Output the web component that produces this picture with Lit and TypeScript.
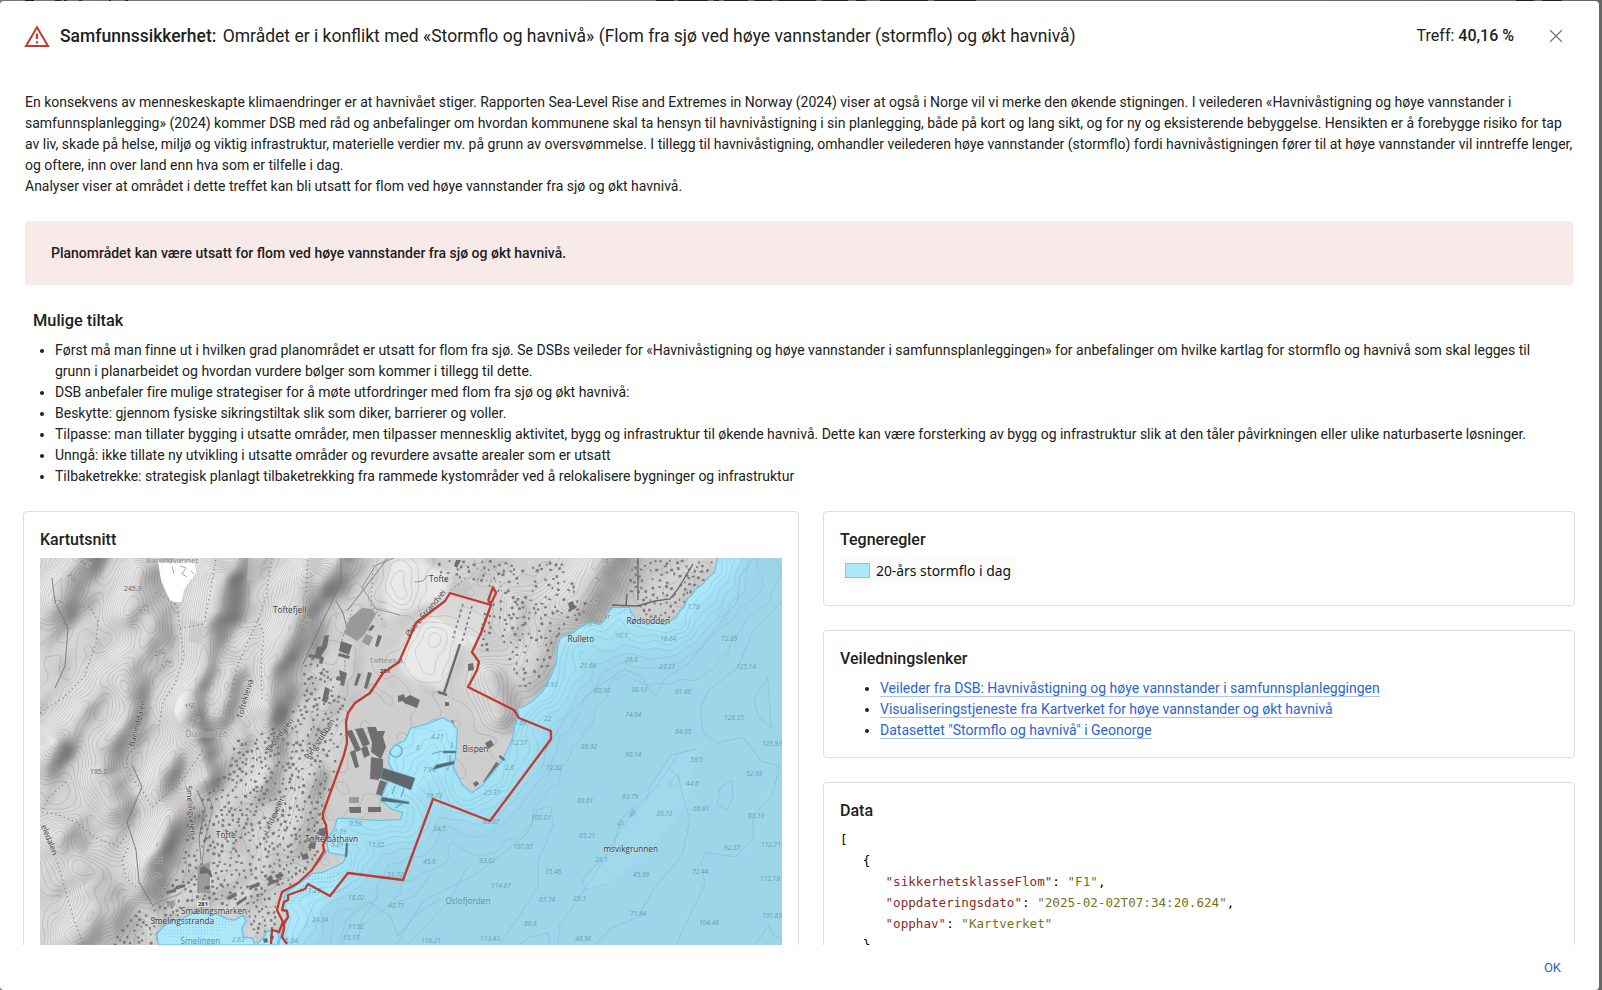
import { LitElement, html, css, svg } from "lit";
import { customElement } from "lit/decorators.js";

type Pt = [number, number];

/* ---------- geometry ---------- */
const X0 = 40, Y0 = 558, H = 387;

const seaEast: Pt[] = [[717,558],[714,572],[708,577],[703,583],[695,589],[692,594],[687,598],[684,606],[680,610],[676,617],[665,624],[655,622],[647,624],[636,619],[632,612],[630,607],[613,607],[608,612],[604,620],[600,624],[590,622],[578,628],[572,633],[560,637],[557,647],[556,663],[550,677],[543,690],[533,700],[524,706],[517,708],[518,716],[515,722],[512,738],[507,750],[500,763],[482,785],[472,792],[463,785],[454,767],[456,757],[457,745],[458,730],[452,722],[443,717],[428,723],[410,728],[405,740],[394,745],[389,752],[388,763],[392,770],[388,780],[380,800],[392,810],[402,813],[400,819],[380,820],[363,819],[348,818],[337,818],[333,830],[326,840],[328,853],[345,856],[343,862],[333,867],[322,872],[312,873],[297,884],[285,893],[282,907],[288,917],[282,930],[278,945]];
const seaPoly: Pt[] = [...seaEast, [278,960], [800,960], [800,540], [717,540]];
const bay: Pt[] = [[158,945],[157,934],[164,926],[173,921],[183,918],[193,913],[217,914],[227,919],[235,920],[243,915],[246,921],[242,928],[243,937],[252,938],[255,945]];
const bay2: Pt[] = [[256,945],[264,937],[267,931],[277,930],[279,938],[277,945]];

const redA: Pt[] = [[271,944],[272,930],[279,932],[283,922],[277,910],[279,902],[282,892],[298,883],[312,870],[324,851],[323,845],[327,836],[326,825],[323,818],[323,813],[344,755],[347,743],[346,722],[348,713],[355,703],[370,693],[383,673],[399,662],[416,623],[445,601],[450,593],[491,605],[481,633],[472,652],[479,662],[477,670],[468,687],[514,710],[519,718],[551,731],[551,739],[490,821],[433,799],[403,880],[348,873],[330,896],[308,884],[305,889],[288,895],[288,900],[284,902],[282,910],[287,911],[288,917],[284,923],[284,929],[282,937],[287,944]];
const redB: Pt[] = [[488,601],[493,587],[496,593],[491,603],[488,601]];

/* ridge: points, crest height, half width */
const ridges: [Pt[], number, number][] = [
  [[[84,540],[66,575],[52,600]], 55, 20],
  [[[140,572],[135,590],[124,614]], 48, 17],
  [[[150,610],[155,634],[140,655],[104,682],[85,708],[60,738]], 42, 20],
  [[[213,575],[207,600],[206,644],[197,675],[180,708]], 60, 20],
  [[[238,548],[228,575],[222,610]], 32, 14],
  [[[305,575],[298,600],[287,633],[272,664],[264,700]], 62, 20],
  [[[232,672],[224,695],[216,713]], 45, 13],
  [[[198,738],[201,755],[204,776]], 48, 14],
  [[[132,692],[122,725],[103,748],[97,773],[112,805]], 50, 18],
  [[[190,712],[176,742],[162,768],[153,790]], 38, 16],
  [[[172,815],[160,835],[148,862],[142,880]], 62, 19],
  [[[42,760],[52,745]], 34, 17],
  [[[60,840],[72,862],[97,873],[98,905],[76,932]], 52, 25],
  [[[345,540],[335,562],[325,580]], 40, 13],
  [[[270,715],[266,750],[262,785]], 24, 14],
  [[[310,775],[300,815],[288,840]], 20, 15],
  [[[604,550],[590,580],[577,602]], 60, 26],
  [[[516,602],[512,628]], 22, 12],
  [[[488,675],[500,712]], 34, 17],
  [[[541,612],[538,655],[530,672]], 25, 21],
  [[[397,567],[402,592]], 18, 17],
  [[[437,640],[426,670]], 16, 20],
  [[[250,640],[244,662]], 20, 13],
  [[[228,720],[244,735]], 18, 13],
];

function segDist(x: number, y: number, pts: Pt[]) {
  let best = 1e9;
  for (let i = 0; i < pts.length - 1; i++) {
    const [ax, ay] = pts[i], [bx, by] = pts[i + 1];
    const dx = bx - ax, dy = by - ay;
    const t = Math.max(0, Math.min(1, ((x - ax) * dx + (y - ay) * dy) / (dx * dx + dy * dy)));
    const d = Math.hypot(x - ax - t * dx, y - ay - t * dy);
    if (d < best) best = d;
  }
  return best;
}
const wobble = (x: number, y: number) =>
  Math.sin(x / 9 + Math.sin(y / 13) * 2) * 1.5 + Math.sin(y / 11 + x / 23) * 1.7 + Math.sin(x / 4.3 - y / 5.7) * 0.6;

function height(x: number, y: number) {
  let h = wobble(x, y) * 1.1;
  /* fine grain running along the valleys, fading out toward the flat built-up land */
  const u = 0.93 * x + 0.37 * y, v = 0.93 * y - 0.37 * x;
  const hilly = Math.max(0, Math.min(1, (620 - u) / 60));
  h += hilly * (Math.sin(u / 6.3 + Math.sin(v / 17) * 1.6) * 2.6 + Math.sin(u / 3.4 + Math.sin(v / 9) * 1.3 + v / 30) * 0.9 + Math.sin(v / 9 + Math.sin(u / 12) * 1.5) * 2.4);
  for (const [pts, top, w] of ridges) {
    const d = segDist(x, y, pts) / w;
    if (d < 3) h += top * Math.exp(-d * d);
  }
  return h;
}
function inside(x: number, y: number, poly: Pt[]) {
  let r = false;
  for (let i = 0, j = poly.length - 1; i < poly.length; j = i++) {
    const [xi, yi] = poly[i], [xj, yj] = poly[j];
    if (yi > y !== yj > y && x < ((xj - xi) * (y - yi)) / (yj - yi) + xi) r = !r;
  }
  return r;
}

/* marching squares over a sampled field */
function contours(f: (x: number, y: number) => number, levels: number[], step: number, x0: number, x1: number, y0 = Y0, y1 = Y0 + H) {
  const nx = Math.ceil((x1 - x0) / step) + 1, ny = Math.ceil((y1 - y0) / step) + 1;
  const g: number[][] = [];
  for (let j = 0; j < ny; j++) {
    g.push([]);
    for (let i = 0; i < nx; i++) g[j].push(f(x0 + i * step, y0 + j * step));
  }
  let d = "";
  for (const l of levels)
    for (let j = 0; j < ny - 1; j++)
      for (let i = 0; i < nx - 1; i++) {
        const a = g[j][i] - l, b = g[j][i + 1] - l, c = g[j + 1][i + 1] - l, e = g[j + 1][i] - l;
        const p: string[] = [];
        const x = x0 + i * step, y = y0 + j * step;
        const put = (px: number, py: number) => p.push(px.toFixed(1) + " " + py.toFixed(1));
        if (a > 0 !== b > 0) put(x + (step * a) / (a - b), y);
        if (b > 0 !== c > 0) put(x + step, y + (step * b) / (b - c));
        if (c > 0 !== e > 0) put(x + (step * e) / (e - c), y + step);
        if (e > 0 !== a > 0) put(x, y + (step * a) / (a - e));
        if (p.length >= 2) d += `M${p[0]}L${p[1]}`;
        if (p.length === 4) d += `M${p[2]}L${p[3]}`;
      }
  return d;
}

function hillshade() {
  const s = 3, levels = new Map<number, string>();
  for (let y = Y0 - 3; y < Y0 + H + 3; y += s)
    for (let x = X0 - 3; x < 724; x += s) {
      const gx = (height(x + 1.5, y) - height(x - 1.5, y)) / 3;
      const gy = (height(x, y + 1.5) - height(x, y - 1.5)) / 3;
      const slope = gx * 0.85 + gy * 0.5;
      let v = 207 + (slope > 0 ? slope * 11 : slope * 25);
      v = Math.round(Math.max(122, Math.min(238, v)) / 4) * 4;
      levels.set(v, (levels.get(v) ?? "") + `M${x} ${y}h3.3v3.3h-3.3z`);
    }
  return [...levels];
}

/* small houses scattered over the built-up areas */
const builtUp: [Pt[], number][] = [
  [[[300,700],[345,690],[338,752],[322,812],[320,845],[300,875],[262,905],[225,905],[165,900],[180,860],[190,805],[210,790],[235,740],[280,725]], 520],
  [[[435,560],[560,560],[590,612],[575,624],[553,640],[548,670],[520,690],[510,670],[502,640],[490,610],[495,585],[440,582]], 165],
  [[[630,560],[712,560],[705,580],[690,592],[678,614],[660,620],[636,612],[640,600],[628,592]], 90],
  [[[110,945],[130,912],[165,900],[190,908],[160,925],[156,945]], 42],
  [[[246,905],[276,905],[274,925],[262,935],[248,932]], 24],
  [[[303,660],[320,655],[335,690],[315,705],[300,697]], 28],
  [[[482,610],[492,615],[486,650],[478,645]], 14],
];
function houses() {
  let seed = 7, d = "";
  const rnd = () => ((seed = (seed * 16807) % 2147483647) / 2147483647);
  for (const [poly, n] of builtUp) {
    const xs = poly.map((p) => p[0]), ys = poly.map((p) => p[1]);
    const ax = Math.min(...xs), bx = Math.max(...xs), ay = Math.min(...ys), by = Math.max(...ys);
    const used: Pt[] = [];
    for (let k = 0, t = 0; k < n && t < n * 12; t++) {
      const x = ax + rnd() * (bx - ax), y = ay + rnd() * (by - ay);
      if (!inside(x, y, poly) || inside(x, y, seaPoly)) continue;
      if (used.some((u) => Math.abs(u[0] - x) + Math.abs(u[1] - y) < 5)) continue;
      used.push([x, y]);
      k++;
      const w = 1.5 + rnd() * 1.7, h = 1.6 + rnd() * 1.4, s = (rnd() - 0.5) * 2;
      d += `M${x.toFixed(1)} ${y.toFixed(1)}l${w.toFixed(1)} ${s.toFixed(1)}l${(-s).toFixed(1)} ${h.toFixed(1)}l${(-w).toFixed(1)} ${(-s).toFixed(1)}z`;
    }
  }
  return d;
}

const line = (p: Pt[], close = false) => "M" + p.map((q) => q.join(" ")).join("L") + (close ? "Z" : "");
const seaDepth = (x: number, y: number) =>
  inside(x, y, seaPoly) ? segDist(x, y, seaEast) + wobble(x, y) * 1.6 : -2;

const shade = hillshade();
const landLines = contours(height, [-3, 2, 7, 12, 17, 22, 27, 32, 37, 42, 47, 52, 57, 62, 67], 3, X0, 724);
const seaLines = contours(seaDepth, [7, 12, 18, 25, 34, 45, 60], 4, 276, 782);
const houseShapes = houses();

type Label = [string, number, number, number?, number?, string?];
const places: Label[] = [
  ["Barlindvannet", 146, 563, 8, 0, "dim"], ["Toftefjell", 273, 613], ["Tofte", 429, 581.5], ["Tofteelva", 369, 663, 8, 0, "dim"],
  ["Rulleto", 567.5, 641.5], ["Rødsodden", 626.5, 623.5], ["Rar", 598, 619, 8, 0, "dim"], ["Bispen", 462.5, 752], ["Diamanten", 185.5, 736.5, 8.2, 0, "dim"],
  ["Tofte", 216, 838], ["Tofte båthavn", 305, 842], ["Smælingsmarken", 181, 913.5], ["Smelingsstranda", 150.5, 924], ["Smelingen", 180.5, 943.5, 8.2, 0, "blue"],
  ["Oslofjorden", 445.5, 903.5, 8.2, 0, "blue"], ["msvikgrunnen", 603.5, 851.5],
  ["Østre Strandvei", 409, 637, 8, -50], ["Barlinddalen", 134, 747, 8, -75], ["Toftekleiva", 242, 719, 8, -74],
  ["Skoledalen", 269, 753, 8, -52], ["Ringstubben", 309, 760, 8, -56], ["Lindeveien", 268, 834, 8, -65],
  ["Smelingveien", 186, 786, 8, 85], ["eledalen", 41, 826, 8, 68],
];
const heights: Label[] = [
  ["245.3", 124, 591], ["185.0", 90, 774], ["200", 67, 576, 6.5, 38], ["225", 80, 561, 6.5, 40], ["175", 53, 604, 6.5, 10], ["225", 141, 614, 6.5, -42],
  ["200", 155, 656, 6.5, -14], ["175", 163, 669, 6.5, -38], ["150", 185, 709, 6.5, -8], ["125", 190, 723, 6.5, -12], ["75", 155, 863, 6.5], ["50", 155, 878, 6.5], ["25", 159, 893, 6.5],
  ["50", 595, 581, 6.5, 10], ["75", 601, 563, 6.5, 12], ["25", 590, 602, 6.5, 10], ["165", 306, 628, 6.5, -60],
];
const depths: Label[] = [
  ["7.78",687,609],["10.7",615,638],["16.64",660,641],["72.89",721,641],["26.8",625,662],["21.66",580,668],["23.21",659,669],["125.14",736,669],
  ["8.93",545,687],["60.98",594,693],["38.13",631,692],["61.66",675,694],["74.04",625,717],["128.35",724,720],["22",544,721],["64.05",675,734],["121.93",762,746],
  ["4.21",431,739],["12.57",511,745],["86.92",581,749],["90.14",625,757],["59.5",690,762],["72.82",546,770],["7.93",423,772],["2",446,770],["6",416,750],["25.37",484,795],["52.93",746,776],
  ["44.6",686,786],["19.73",426,798],["88.61",577,803],["63.79",622,799],["66.81",693,811],["103.01",531,820],["30.73",656,816],["83.13",748,818],["65.07",483,824],["34.5",433,831],
  ["65.21",579,838],["50",619,828,6.6,-42],["40",631,818,6.6,-42],["112.71",761,847],["107.05",513,849],["92.37",724,850],["28.1",595,862],["0.56",349,826],["1.59",334,834],["0.81",331,847],["15.65",368,847],
  ["45.6",423,864],["93.82",479,863],["75.46",545,874],["45.69",633,877],["72.44",692,874],["112.18",760,881],["31.72",387,877],["114.67",491,888],["67.74",539,902],["29.3",573,901],
  ["1.29",308,893],["18.02",348,900],["43.77",388,908],["24.34",312,922],["71.94",630,916],["101.83",762,918],["11.92",348,929],["80.6",524,926],["104.48",699,925],["15.17",343,940],["5.84",285,943],
  ["113.43",480,941],["118.21",421,943],["48.96",575,941],["2.63",232,942],["2.6",505,770],["0",588,626],["1.66",514,725],
];
const labels = (list: Label[], base: string) =>
  list.map(([t, x, y, size = 8.2, rot = 0, cls = ""]) =>
    svg`<text class="${base} ${cls}" x=${x} y=${y} font-size=${base === "depth" ? 6.6 : base === "spot" ? Math.min(size, 6.8) : size} transform="rotate(${rot} ${x} ${y})">${t}</text>`);

@customElement("map-view")
class MapView extends LitElement {
  static styles = css`
    :host { display: block; }
    svg { display: block; width: 742px; height: 560px; }
    text { font-family: "Open Sans", "Noto Sans", sans-serif; }
    .place { fill: #3b3b3b; stroke: #e6e6e6; stroke-opacity: .5; stroke-width: 1px; paint-order: stroke; }
    .dim { fill: #858585; }
    .blue { fill: #5c94a8; stroke: none; }
    .spot { fill: #606060; stroke: #ddd; stroke-opacity: .6; stroke-width: 1px; paint-order: stroke; }
    .depth { fill: #64a0b4; font-style: italic; }
  `;
  render() {
    return html`<svg viewBox="40 558 742 560">
      <defs>
        <filter id="soft" x="-5%" y="-5%" width="110%" height="110%"><feGaussianBlur stdDeviation="1.3" /></filter>
        <filter id="melt" x="-20%" y="-20%" width="140%" height="140%"><feGaussianBlur stdDeviation="3" /></filter>
        <filter id="spread" x="-20%" y="-20%" width="140%" height="140%"><feGaussianBlur stdDeviation="9" /></filter>
        <clipPath id="seaClip"><path d=${line(seaPoly, true)} /></clipPath>
        <pattern id="dots" width="3" height="3" patternUnits="userSpaceOnUse"><rect width="1" height="1" fill="#8fd0e6" /></pattern>
      </defs>
      <rect x="40" y="558" width="742" height="560" fill="#cfcfcf" />
      <g filter="url(#soft)">${shade.map(([v, d]) => svg`<path fill="rgb(${v},${v},${v})" d=${d} />`)}</g>

      <path filter="url(#melt)" fill="#eeeeee" opacity=".85" d="M392 558L384 590L384 617L412 612L445 597L450 575L430 565L420 558ZM408 635L442 608L488 612L474 650L460 645L443 690L404 675L400 660Z" />
      <path filter="url(#melt)" fill="#cecece" d="M350 715L378 690L440 700L500 735L495 765L470 790L400 815L335 825L330 800Z" />
      <path fill="#d8d8d8" opacity=".8" d="M440 594L490 606L478 640L436 618ZM452 566L462 566L475 583L446 583Z" />
      <path fill="none" stroke="#5c5c5c" stroke-opacity=".3" stroke-width=".65" d=${landLines} />
      <path fill="#fff" d="M158 562L195 562L196 573L189 582L184 590L181 602L171 602L166 592L161 580Z" />
      <path fill="none" stroke="#aaa" stroke-width="1" d="M172 566l2 8M180 566l6 2l-4 6l5 3M191 571l3 3" />
      <path fill="#c3c3c3" d="M248 558h15l-4 20l-12 3ZM190 620l14 3l-2 22l-14 -4ZM452 575l15 2l6 12l-9 8l-12 -6Z" opacity=".6" />

      <g fill="none" stroke="#808080" stroke-width="1.2" stroke-dasharray="1.2 3.2">
        <path d="M156 592l14 8l7 6l4 30l3 20l-9 28l-12 18l-4 24M180 628l24 -4l6 -30l6 -36M272 558l-6 38l-8 24l-20 44l-12 50M258 620l6 14l-3 28l1 40M308 560l-2 32M66 606l24 1l8 14l-2 22l-12 34l-20 20l-24 16M373 565l-2 40l12 16M352 610l-10 30l4 30M138 745l-10 10l-2 14l18 24l8 14l30 -26l8 -12l14 -20M66 782l-18 16l-6 14l14 2l20 8l20 16l22 8l10 -12M128 848l-6 12l4 18l10 9M44 830l14 34l16 56l10 26M451 590l15 -12l34 4l2 12M477 568l10 6" />
        <path stroke="#777" stroke-width="1.6" stroke-dasharray="2.6 3" d="M463 604l-10 34M472 606l-10 36" />
      </g>
      <g fill="none" stroke="#757575" stroke-width=".9">
        <path d="M341 558v24l-38 82M388 558l-41 53M52 578l3 24l13 26l-3 38l-10 22M336 601l7 12l5 18M132 765l10 22l-15 35l9 28l3 32l14 24M197 790l8 18l-6 30l2 22M330 846l-14 20" />
        <path stroke="#8c8c8c" d="M400 615l-24 -6l-14 -22l14 -22l18 -7M205 780l8 30l-8 28l-3 26M415 582l8 -1l5 -6M152 905l30 -12M340 880l-38 3" />
        <path stroke="#666" stroke-width="1.3" d="M612 605l25 1l18 -5l15 -2l8 -10l15 -25M638 558v42M626 606l1 -12" />
        <path stroke="#6b6b6b" stroke-width="2.4" d="M460 644l-16 49M438 692l9 3" />
      </g>

      <g fill="#6f6f6f">
        <path d=${houseShapes} opacity=".85" />
        <path d="M324 636l5 -1l-2 12l-6 9l3 2l-2 6l-3 -1l1 -4l-12 -2l1 -3l6 1l2 -8l5 -1zM341 641l11 4l-3 10l-10 -4ZM339 653l11 3l-1 3l-11 -3ZM339 670l8 3l-3 13l-4 -1l1 -4l-5 -1l1 -4l3 1ZM325 687l5 2l-3 14l-5 -2ZM372 625l3 1l-4 5l-3 -1ZM378 635l4 1l-4 11l-3 -1ZM358 673l3 1l-4 12l-3 -1ZM368 672l4 1l-5 16l-3 -1Z" />
        <path d="M398 696l6 -2l1 4l5 -3l10 5l-3 8l-13 -5l-1 -2l-5 1ZM346 731l6 -1l9 20l-5 2ZM355 729l8 -1l7 16l-7 3ZM367 727l9 0l1 4l8 0l-2 6l3 10l-5 12l-10 -7l1 -9ZM361 748l6 -2l3 9l-6 3ZM350 752l5 -2l4 17l-4 1ZM371 757l12 2v9l32 10l-4 12l-32 -12v2l-9 -1Z" />
        <path d="M380 780l9 3l-5 14l-8 -3ZM349 807h12v6h-11ZM368 807h13v5h-13ZM319 829l8 -2l-2 10l-6 -2ZM310 843l6 -2l-1 8l-7 -1ZM301 855l6 -2l2 5l-6 2Z" />
        <path d="M485 743l6 -3l3 5l-6 4ZM496 762l4 2l-12 20l-5 -2ZM473 783l4 -2l2 3l-4 3ZM468 664l5 -1l1 7l-6 1ZM448 722l5 -2l1 5l-5 1ZM568 603l5 -2l1 4l3 1l-1 2l-6 3ZM456 560h5l-4 8l-3 -2ZM445 702h4v4h-4Z" />
        <path fill="#9a9a9a" d="M198 866l12 -4v32l-13 -2ZM349 797h10v6h-10ZM366 634l7 3l-4 9l-7 -4ZM167 902l7 -2l1 6l-8 1ZM350 618l12 -10l10 1l4 5l-11 20l-8 7l-13 -8Z" />
        <path d="M200 868l4 -2l7 5l1 7l-5 -5l-7 1ZM205 886h5v3h-6ZM228 896l8 -4l1 4l-8 4ZM236 903l10 -7l1 3l-9 6ZM249 886l10 -4l1 4l-10 3ZM268 877l4 -2l1 5l6 -1v3l-10 3ZM275 875l7 -2l2 3l-7 3ZM176 886l9 -2v3l-10 3ZM166 891l10 -2v3l-10 2Z" />
      </g>

      <path fill="#9dd5e9" d=${line(seaPoly, true)} />
      <g clip-path="url(#seaClip)">
        <path fill="none" stroke="#a4e0f3" stroke-width="56" filter="url(#spread)" d=${line(seaEast)} />
        <path fill="#ade7fa" filter="url(#melt)" d="M380 745L410 725L462 715L452 765L420 790L380 806ZM320 815L345 817L350 850L325 873L348 880L285 945L270 945L280 890L305 870ZM716 558L745 558L720 585L690 612L660 632L620 622L560 650L550 690L515 720L517 706L553 667L557 635L613 600L675 615Z" opacity=".85" />
        <path fill="#a2dcef" opacity=".6" d="M697 749L678 755L668 765L640 800L615 840L582 885L588 892L606 884L640 860L680 815L692 790Z" />
        <path fill="url(#dots)" d="M282 900l30 -26l30 -4l-20 25l-35 10v35h-9ZM605 608h25l2 7h-28Z" />
        <path fill="none" stroke="#72b4c9" stroke-opacity=".45" stroke-width=".7" d=${seaLines} />
        <g fill="none" stroke="#78b4c7" stroke-opacity=".55" stroke-width=".8" stroke-linejoin="round">
          <path d="M754 558l-14 18l-3 26l-20 25l-28 36l-22 14l-13 20l-12 -20l-18 -8l-29 20l-29 28l-23 38M782 601l-30 32l-14 34l-30 24l-8 18l3 24l14 10l26 -6l18 24l18 5l-6 28l-20 22v24l-18 17l-30 -5l-4 12l4 20l-24 50l-12 31" />
          <path d="M697 749l-26 6l-20 30l-6 18l-11 8l-16 24l-21 36l-27 40l-10 14l-4 36l8 9l16 -9l30 -32l28 -12l16 -28l28 -34l8 -34l-12 -44l-8 -8M606 884l-20 6l-4 -10l32 -34l6 -26l34 -30l24 -35" />
          <path d="M551 806l-14 4l-10 24l-32 26l-22 16l-50 25l-27 44M551 806l2 20l-15 35v26l-18 28l-22 30M407 945l43 -45l18 -34M732 780l-12 8l-3 16l10 6l6 -14zM768 678l-14 20l4 18l13 12zM675 776l4 -3v8l-6 6l-4 -2zM755 945l14 -20l3 10l10 4M518 945l12 -8l18 -4l2 12" />
          <path d="M340 940l6 -20l24 -18l20 14l8 20l18 -22l25 -16M348 886l-34 18l-10 25M380 893l-18 26l-4 22M431 874l-16 22l-28 10" />
        </g>
        <path fill="none" stroke="#5aa9c6" stroke-width="1.2" d="M396 745a6 6 0 1 0 .1 0M395 786l-3 8M404 788l-3 9M395 808l8 -5M432 754l10 -3M452 742v6M450 755v10" />
        <path fill="none" stroke="#62bfe4" stroke-width="2.2" d=${line(seaEast)} />
      </g>
      <path fill="#5f6568" stroke="#4ba4c8" stroke-width=".6" d="M383 768l32 10l-4 12l-30 -12ZM382 797l27 5v2l-28 -3ZM432 770l4 -5l18 -4v3l-15 4ZM443 751h13v2h-13ZM346 843h2l-1 14h-2ZM500 755l5 4l-1 2l-5 -4Z" />
      <path fill="#ade7fa" stroke="#6fc6e8" stroke-width="1.5" d="${line(bay, true)}${line(bay2, true)}" />
      <path fill="url(#dots)" d="M160 934l20 -14l34 -4l22 6l-18 12l-48 4Z" />
      <path fill="#6b6b6b" d="M263 939l4 -1l1 4l-4 1ZM270 935l4 1l-1 4l-3 -1Z" />

      ${labels(depths, "depth")} ${labels(heights, "spot")} ${labels(places, "place")}
      <g><rect x="197" y="900.5" width="12" height="6.5" fill="#f2f2f2" opacity=".8" /><text x="198" y="906" font-size="5.8" font-weight="700" fill="#333">281</text>
      <text x="380" y="672.5" font-size="5.8" font-weight="700" fill="#333">281</text></g>
      <path fill="none" stroke="#bf3a30" stroke-width="2.3" stroke-linejoin="round" d="${line(redA)}${line(redB)}" />
    </svg>`;
  }
}

const json: [string, string][] = [["sikkerhetsklasseFlom", "F1"], ["oppdateringsdato", "2025-02-02T07:34:20.624"], ["opphav", "Kartverket"]];

@customElement("app-root")
class AppRoot extends LitElement {
  static styles = css`
    :host { display: block; height: 990px; overflow: hidden; background: linear-gradient(90deg, #787878, #686868); font: 14px/21px Roboto, sans-serif; color: #212121; }
    * { box-sizing: border-box; }
    h2, h3, p, ul, pre { margin: 0; font-size: inherit; font-weight: inherit; }
    .peek { display: block; width: 1602px; height: 1px; }
    .dialog { display: flex; flex-direction: column; width: 1599px; height: 989px; background: #fff; border-radius: 4px; overflow: hidden; }
    .head { display: flex; align-items: center; height: 69px; padding: 0 36px 0 24px; flex: none; }
    .warn { width: 26px; height: 24px; margin-right: 10px; }
    .title { font-size: 17.5px; line-height: 24px; white-space: nowrap; }
    b, h3 { font-weight: 500; }
    .title b { margin-right: 2px; }
    .hit { margin-left: auto; font-size: 16px; line-height: 24px; }
    .close { width: 14px; height: 14px; margin-left: 35px; }
    .body { height: 875px; overflow: hidden; padding: 22px 24px 0 23px; flex: none; }
    .intro { padding-left: 2px; white-space: nowrap; letter-spacing: -.004px; }
    .alert { height: 64px; margin: 24px 2px 0; padding: 22px 26px; background: #f9eaea; border-radius: 4px; font-weight: 500; }
    .tiltak { padding: 24px 10px 24px; }
    h3 { font-size: 16px; line-height: 24px; }
    .tiltak h3 { font-size: 16.35px; }
    .tiltak ul { padding: 7px 0 0 22px; white-space: nowrap; letter-spacing: -.004px; }
    .cols { display: flex; gap: 24px; align-items: flex-start; }
    .card { border: 1px solid #dedede; border-radius: 4px; padding: 16px 16px; background: #fff; }
    .map { width: 776px; height: 640px; }
    .map map-view { margin-top: 6px; }
    .side { display: flex; flex-direction: column; gap: 24px; width: 752px; }
    .rules { height: 95px; }
    .legend { display: inline-flex; align-items: center; height: 25px; margin-top: 6px; padding: 0 5px; background: #fafafa; color: #111; font: 13.85px/24px "Noto Sans", sans-serif; }
    .swatch { width: 25px; height: 15px; margin-right: 6px; background: #ade7fa; border: 1px solid #6fcdf2; }
    .links { height: 128px; }
    .links ul { padding: 7px 0 0 40px; }
    a { color: #2a64d8; text-decoration: none; border-bottom: 1px solid #a9c3f7; }
    .data { height: 300px; }
    pre { padding-top: 6px; font: 12.6px/21px "DejaVu Sans Mono", monospace; color: #000; }
    .key { color: #8c2a2a; }
    .val { color: #74751b; }
    .foot { display: flex; justify-content: flex-end; align-items: center; flex: 1; padding-right: 38px; font-size: 13px; font-weight: 400; color: #2a62c9; }
  `;
  render() {
    return html`
      <svg class="peek" viewBox="0 0 1602 1"><path fill="#0a1a55" d="M25 0h9v1h-9z" /><path fill="#222" d="M55 0h6v1h-6zM64 0h3v1h-3zM79 0h3v1h-3zM109 0h2v1h-2zM125 0h3v1h-3zM656 0h18v1h-18zM678 0h30v1h-30zM714 0h5v1h-5zM724 0h24v1h-24zM754 0h18v1h-18zM778 0h38v1h-38zM822 0h26v1h-26zM856 0h10v1h-10zM880 0h48v1h-48zM934 0h42v1h-42zM1516 0h18v1h-18zM1542 0h20v1h-20z" /></svg>
      <div class="dialog">
        <header class="head">
          <svg class="warn" viewBox="0 0 26 24"><path d="M13 3.2L24 22H2Z" fill="none" stroke="#c23a2e" stroke-width="2" /><path d="M13 9.6v5.4M13 17.2v2.4" stroke="#c23a2e" stroke-width="2.1" /></svg>
          <h2 class="title"><b>Samfunnssikkerhet:</b> Området er i konflikt med «Stormflo og havnivå» (Flom fra sjø ved høye vannstander (stormflo) og økt havnivå)</h2>
          <span class="hit">Treff: <b>40,16 %</b></span>
          <svg class="close" viewBox="0 0 14 14"><path d="M1.2 1.2l11.6 11.6M12.8 1.2L1.2 12.8" stroke="#757575" stroke-width="1.3" /></svg>
        </header>
        <main class="body">
          <p class="intro">En konsekvens av menneskeskapte klimaendringer er at havnivået stiger. Rapporten Sea-Level Rise and Extremes in Norway (2024) viser at også i Norge vil vi merke den økende stigningen. I veilederen «Havnivåstigning og høye vannstander i<br />samfunnsplanlegging» (2024) kommer DSB med råd og anbefalinger om hvordan kommunene skal ta hensyn til havnivåstigning i sin planlegging, både på kort og lang sikt, og for ny og eksisterende bebyggelse. Hensikten er å forebygge risiko for tap<br />av liv, skade på helse, miljø og viktig infrastruktur, materielle verdier mv. på grunn av oversvømmelse. I tillegg til havnivåstigning, omhandler veilederen høye vannstander (stormflo) fordi havnivåstigningen fører til at høye vannstander vil inntreffe lenger,<br />og oftere, inn over land enn hva som er tilfelle i dag.<br />Analyser viser at området i dette treffet kan bli utsatt for flom ved høye vannstander fra sjø og økt havnivå.</p>
          <div class="alert">Planområdet kan være utsatt for flom ved høye vannstander fra sjø og økt havnivå.</div>
          <section class="tiltak">
            <h3>Mulige tiltak</h3>
            <ul>
              <li>Først må man finne ut i hvilken grad planområdet er utsatt for flom fra sjø. Se DSBs veileder for «Havnivåstigning og høye vannstander i samfunnsplanleggingen» for anbefalinger om hvilke kartlag for stormflo og havnivå som skal legges til<br />grunn i planarbeidet og hvordan vurdere bølger som kommer i tillegg til dette.</li>
              <li>DSB anbefaler fire mulige strategiser for å møte utfordringer med flom fra sjø og økt havnivå:</li>
              <li>Beskytte: gjennom fysiske sikringstiltak slik som diker, barrierer og voller.</li>
              <li>Tilpasse: man tillater bygging i utsatte områder, men tilpasser mennesklig aktivitet, bygg og infrastruktur til økende havnivå. Dette kan være forsterking av bygg og infrastruktur slik at den tåler påvirkningen eller ulike naturbaserte løsninger.</li>
              <li>Unngå: ikke tillate ny utvikling i utsatte områder og revurdere avsatte arealer som er utsatt</li>
              <li>Tilbaketrekke: strategisk planlagt tilbaketrekking fra rammede kystområder ved å relokalisere bygninger og infrastruktur</li>
            </ul>
          </section>
          <div class="cols">
            <section class="card map"><h3>Kartutsnitt</h3><map-view></map-view></section>
            <div class="side">
              <section class="card rules"><h3>Tegneregler</h3><div class="legend"><span class="swatch"></span>20-års stormflo i dag</div></section>
              <section class="card links"><h3>Veiledningslenker</h3><ul>
                <li><a>Veileder fra DSB: Havnivåstigning og høye vannstander i samfunnsplanleggingen</a></li>
                <li><a>Visualiseringstjeneste fra Kartverket for høye vannstander og økt havnivå</a></li>
                <li><a>Datasettet "Stormflo og havnivå" i Geonorge</a></li></ul></section>
              <section class="card data"><h3>Data</h3><pre>[
   {
${json.map(([k, v], i) => html`      <span class="key">"${k}"</span>: <span class="val">"${v}"</span>${i < 2 ? "," : ""}
`)}   }
]</pre></section>
            </div>
          </div>
        </main>
        <footer class="foot">OK</footer>
      </div>`;
  }
}
